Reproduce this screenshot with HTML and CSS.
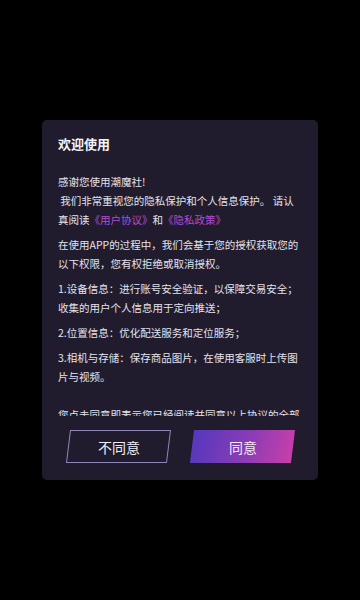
FILE: index.html
```html
<!DOCTYPE html>
<html lang="zh-CN">
<head>
<meta charset="utf-8">
<title>欢迎使用</title>
<link rel="stylesheet" href="styles.css">
</head>
<body>
<div class="dialog">
  <h1 class="title">欢迎使用</h1>
  <div class="content">
    <p>感谢您使用潮魔社!<br>&nbsp;我们非常重视您的隐私保护和个人信息保护。 请认真阅读<span class="link">《用户协议》</span>和<span class="link">《隐私政策》</span></p>
    <p>在使用APP的过程中，我们会基于您的授权获取您的以下权限，您有权拒绝或取消授权。</p>
    <p>1.设备信息：进行账号安全验证，以保障交易安全；收集的用户个人信息用于定向推送；</p>
    <p>2.位置信息：优化配送服务和定位服务；</p>
    <p>3.相机与存储：保存商品图片，在使用客服时上传图片与视频。</p>
    <p class="gap">您点击同意即表示您已经阅读并同意以上协议的全部内容。</p>
  </div>
  <div class="actions">
    <div class="btn btn-ghost"><span>不同意</span></div>
    <div class="btn btn-primary"><span>同意</span></div>
  </div>
</div>
</body>
</html>
```
FILE: styles.css
```css
* { box-sizing: border-box; }
html, body {
  margin: 0;
  padding: 0;
  background: #000;
  height: 600px;
  overflow: hidden;
  font-family: "Noto Sans CJK SC", "Noto Sans", sans-serif;
}
.dialog {
  margin: 120px 0 0 42px;
  width: 276px;
  height: 360px;
  background: #201c2e;
  border-radius: 5px;
  padding: 15px 0 17px;
  display: flex;
  flex-direction: column;
}
.title {
  margin: 0;
  padding: 0 16px;
  font-size: 13px;
  line-height: 18px;
  font-weight: 700;
  color: #f4f3f8;
}
.content {
  margin-top: 18.5px;
  height: 244.5px;
  flex: none;
  overflow: hidden;
  padding: 0 16px;
  color: #e4e2ec;
  font-size: 10.5px;
  line-height: 19px;
  text-spacing-trim: space-all;
}
.content p {
  margin: 0 0 6px;
}
.content p.gap {
  margin-top: 19px;
}
.link {
  color: #b54bd2;
}
.actions {
  margin-top: 14px;
  display: flex;
  justify-content: center;
  gap: 23px;
}
.btn {
  width: 101px;
  height: 33px;
  transform: skewX(-7deg);
  display: flex;
  align-items: center;
  justify-content: center;
}
.btn span {
  transform: skewX(7deg);
  font-size: 14px;
  line-height: 20px;
}
.btn-ghost {
  border: 1px solid #8f87bb;
  color: #efedf5;
}
.btn-primary {
  background: linear-gradient(100deg, #5438bd 0%, #8a3cb6 55%, #c93fa9 100%);
  color: #f5e8f6;
}
```
